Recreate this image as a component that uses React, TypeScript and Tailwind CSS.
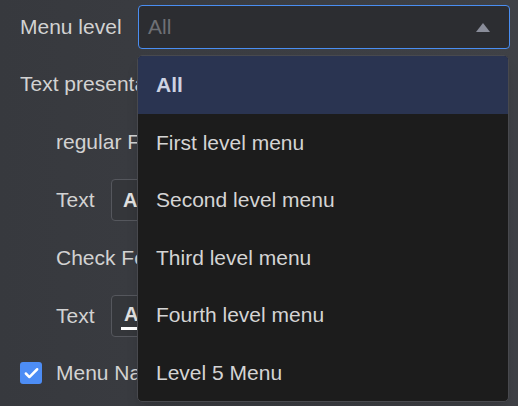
import { Check } from 'lucide-react'

const items = ['All', 'First level menu', 'Second level menu', 'Third level menu', 'Fourth level menu', 'Level 5 Menu']

export default function App() {
  return (
    <div
      className="relative w-[518px] h-[406px] overflow-hidden bg-gradient-to-r from-[#37393e] to-[#3f4146] text-[21px] text-[#d2d2d2]"
      style={{ fontFamily: '"Liberation Sans", Arial, sans-serif' }}
    >
      <div className="pt-[5px] pl-[20px]">
        {/* Menu level select */}
        <div className="flex items-center h-[44px]">
          <span className="w-[118px] shrink-0">Menu level</span>
          <div className="flex items-center justify-between w-[372px] h-[44px] rounded-[4px] border border-[#4a8ef2] bg-[#2c2d31] pl-[9px] pr-[19px]">
            <span className="text-[#6e7075]">All</span>
            <svg width="14" height="9" viewBox="0 0 14 9">
              <path d="M7 0 L14 9 L0 9 Z" fill="#8a8d9a" />
            </svg>
          </div>
        </div>

        {/* the rest is covered by the open menu from x=137 */}
        <div className="w-[117px] overflow-hidden whitespace-nowrap">
          <div className="flex items-center h-[58px] mt-[6px]">Text presentation</div>

          <div className="flex items-center h-[58px] pl-[36px]">regular Font</div>

          <div className="flex items-center h-[58px] pl-[36px]">
            <span className="w-[55px] shrink-0">Text</span>
            <div className="flex items-center w-[60px] shrink-0 h-[42px] rounded-[4px] border border-[#55575d] bg-[#34363a] pl-[11px]">
              <span className="font-bold text-[20px] text-[#e0e0e0]">A</span>
            </div>
          </div>

          <div className="flex items-center h-[58px] pl-[36px]">Check Font</div>

          <div className="flex items-center h-[58px] pl-[36px]">
            <span className="w-[55px] shrink-0">Text</span>
            <div className="flex items-center w-[60px] shrink-0 h-[42px] rounded-[4px] border border-[#55575d] bg-[#34363a] pl-[7px]">
              <div className="flex flex-col items-center">
                <span className="font-bold text-[20px] leading-[22px] text-[#e0e0e0] px-[5px]">A</span>
                <div className="w-[20px] h-[3px] bg-white mt-[2px]" />
              </div>
            </div>
          </div>

          <div className="flex items-center h-[56px]">
            <div className="flex items-center justify-center w-[22px] h-[22px] shrink-0 rounded-[3px] bg-[#4d8df5] mr-[14px]">
              <Check className="w-[17px] h-[17px] text-white" strokeWidth={3.5} />
            </div>
            <span>Menu Name</span>
          </div>
        </div>
      </div>

      {/* Dropdown menu */}
      <div className="absolute left-[137px] top-[55px] w-[372px] h-[347px] rounded-[5px] border border-[#48494e] bg-[#1c1c1c] overflow-hidden shadow-lg">
        {items.map((item, i) => (
          <div
            key={item}
            className={
              i === 0
                ? 'flex items-center h-[57.5px] pl-[18px] bg-[#2a3451] font-bold text-[#cdd2e2]'
                : 'flex items-center h-[57.5px] pl-[18px] text-[#d4d4d4]'
            }
          >
            {item}
          </div>
        ))}
      </div>
    </div>
  )
}
